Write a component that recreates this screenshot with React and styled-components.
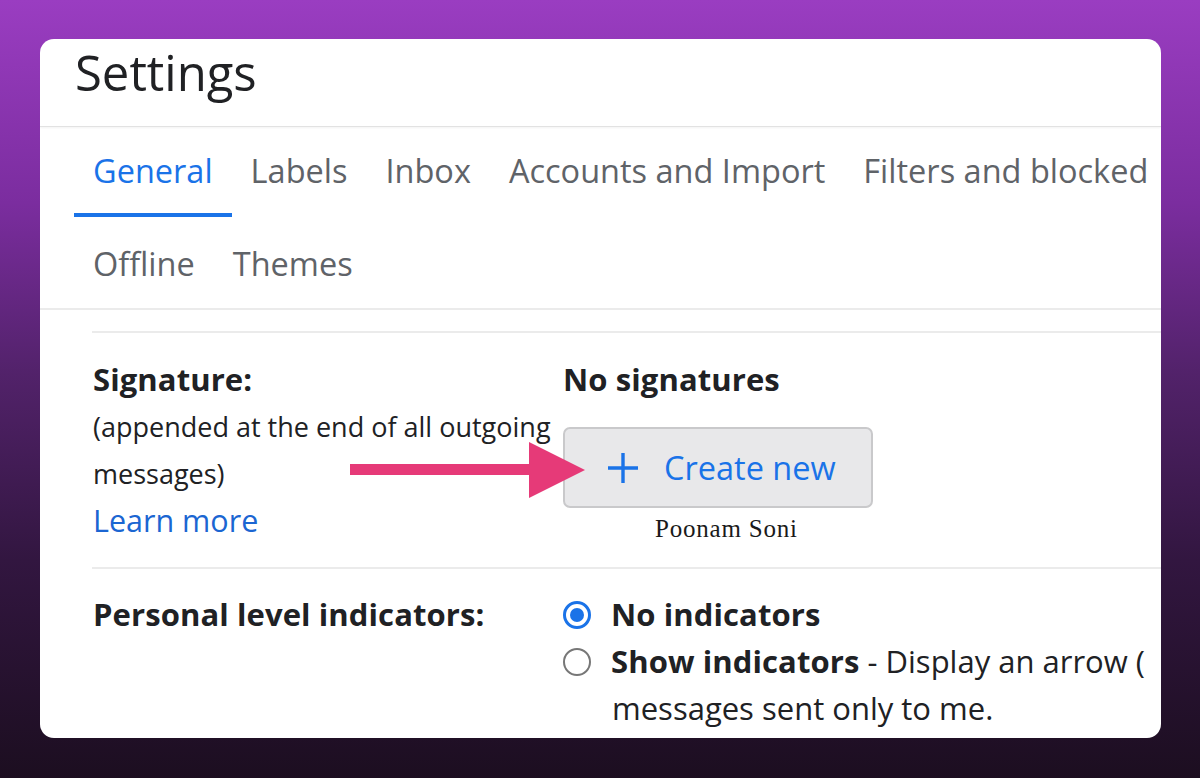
import React from "react"
import styled, { createGlobalStyle } from "styled-components"

const GlobalStyle = createGlobalStyle`
  html, body {
    margin: 0;
    padding: 0;
  }
  body {
    font-family: "Open Sans", "Noto Sans", Arial, sans-serif;
    background: #1c0e20;
  }
`

const colors = {
  Blue: "#1a73e8",
  Link: "#1b66d2",
  Text: "#202124",
  Gray: "#5f6368",
  Line: "#ebebeb",
  Pink: "#e63a78",
}

const Page = styled.div`
  width: 1200px;
  height: 778px;
  box-sizing: border-box;
  padding: 39px 39px 40px 40px;
  background: linear-gradient(
    180deg,
    #9a3dc1 0%,
    #7b2d9f 26%,
    #52226a 48%,
    #321640 72%,
    #1c0e20 100%
  );
`
const Card = styled.div`
  height: 100%;
  background: #fff;
  border-radius: 14px;
  overflow: hidden;
  display: flex;
  flex-direction: column;
`
const Header = styled.header`
  height: 88px;
  box-sizing: border-box;
  flex-shrink: 0;
  padding: 0 0 0 35px;
  border-bottom: 1px solid #e2e2e2;
  box-shadow: 0 1px 2px rgba(0, 0, 0, 0.05);
`
const Title = styled.h1`
  margin: 0;
  font-weight: 400;
  font-size: 49px;
  line-height: normal;
  color: ${colors.Text};
`
const TabArea = styled.nav`
  padding-left: 34px;
  border-bottom: 2px solid ${colors.Line};
`
const TabRow = styled.div`
  display: flex;
  box-sizing: border-box;
  height: ${(p) => p.height}px;
  padding-top: ${(p) => p.offset || 0}px;
`
const Tab = styled.div`
  flex-shrink: 0;
  display: flex;
  align-items: center;
  padding: 0 19px;
  font-size: 32.5px;
  white-space: nowrap;
  color: ${(p) => (p.active ? colors.Blue : colors.Gray)};
  border-bottom: 4px solid ${(p) => (p.active ? colors.Blue : "transparent")};
`
const Content = styled.section`
  margin: 21px 0 0 52px;
  border-top: 2px solid ${colors.Line};
`
const SettingRow = styled.div`
  position: relative;
  display: grid;
  grid-template-columns: 471px 1fr;
  padding: ${(p) => p.pad};
  border-bottom: ${(p) => (p.last ? "none" : `2px solid ${colors.Line}`)};
  line-height: 47px;
  font-size: ${(p) => p.size}px;
  color: ${colors.Text};
`
const LabelCol = styled.div`
  padding-left: 1px;
`
const Label = styled.div`
  font-weight: 700;
  font-size: 31px;
  letter-spacing: 0.1px;
  height: 47px;
`
const Note = styled.div`
  white-space: nowrap;
  height: 47px;
`
const LinkText = styled.a`
  display: block;
  height: 47px;
  color: ${colors.Link};
  font-size: 30.5px;
  text-decoration: none;
`
const ValueCol = styled.div`
  display: flex;
  flex-direction: column;
  align-items: flex-start;
  white-space: nowrap;
`
const Strong = styled.span`
  font-weight: 700;
  font-size: 31px;
  letter-spacing: 0.1px;
`
const CreateButton = styled.button`
  margin-top: 24px;
  width: 310px;
  height: 81px;
  box-sizing: border-box;
  display: flex;
  align-items: center;
  gap: 25px;
  padding: 0 0 0 42px;
  background: #e8e8ea;
  border: 2px solid #c9c9cb;
  border-radius: 7px;
  color: ${colors.Blue};
  font-family: inherit;
  font-size: 32.5px;
`
const Watermark = styled.div`
  margin: 6px 0 0 92px;
  font-family: "Liberation Serif", "DejaVu Serif", serif;
  font-size: 25px;
  line-height: 30px;
  letter-spacing: 0.8px;
  color: #1a1a1a;
`
const Arrow = styled.svg`
  position: absolute;
  left: 258px;
  top: 109px;
  z-index: 2;
`
const Option = styled.div`
  display: flex;
  align-items: center;
  gap: 20px;
  height: 47px;
`
const Radio = styled.span`
  width: 28px;
  height: 28px;
  box-sizing: border-box;
  border-radius: 50%;
  flex-shrink: 0;
  display: flex;
  align-items: center;
  justify-content: center;
  border: ${(p) => (p.checked ? `3px solid ${colors.Blue}` : "2px solid #777")};
  &::after {
    content: "";
    width: 14px;
    height: 14px;
    border-radius: 50%;
    background: ${(p) => (p.checked ? colors.Blue : "transparent")};
  }
`
const Wrapped = styled.div`
  padding-left: 49px;
  height: 47px;
`

const PlusIcon = () => (
  <svg width="32" height="32" viewBox="0 0 32 32">
    <path d="M16 1v30M1 16h30" stroke={colors.Blue} strokeWidth="3.4" fill="none" />
  </svg>
)

const App = () => {
  return (
    <Page>
      <GlobalStyle />
      <Card>
        <Header>
          <Title>Settings</Title>
        </Header>
        <TabArea>
          <TabRow height={90}>
            <Tab active>General</Tab>
            <Tab>Labels</Tab>
            <Tab>Inbox</Tab>
            <Tab>Accounts and Import</Tab>
            <Tab>Filters and blocked</Tab>
          </TabRow>
          <TabRow height={91} offset={6}>
            <Tab>Offline</Tab>
            <Tab>Themes</Tab>
          </TabRow>
        </TabArea>
        <Content>
          <SettingRow pad="23px 0 23px 0" size={27}>
            <LabelCol>
              <Label>Signature:</Label>
              <Note>(appended at the end of all outgoing</Note>
              <Note>messages)</Note>
              <LinkText href="#">Learn more</LinkText>
            </LabelCol>
            <ValueCol>
              <Strong>No signatures</Strong>
              <CreateButton>
                <PlusIcon />
                Create new
              </CreateButton>
              <Watermark>Poonam Soni</Watermark>
            </ValueCol>
            <Arrow width="235" height="56" viewBox="0 0 235 56">
              <rect x="0" y="22" width="184" height="11" fill={colors.Pink} />
              <polygon points="179,0 235,28 179,56" fill={colors.Pink} />
            </Arrow>
          </SettingRow>
          <SettingRow pad="22px 0 0 0" size={31} last>
            <LabelCol>
              <Label>Personal level indicators:</Label>
            </LabelCol>
            <ValueCol>
              <Option>
                <Radio checked />
                <Strong>No indicators</Strong>
              </Option>
              <Option>
                <Radio />
                <span>
                  <Strong>Show indicators</Strong> - Display an arrow (
                </span>
              </Option>
              <Wrapped>messages sent only to me.</Wrapped>
            </ValueCol>
          </SettingRow>
        </Content>
      </Card>
    </Page>
  )
}

export default App
